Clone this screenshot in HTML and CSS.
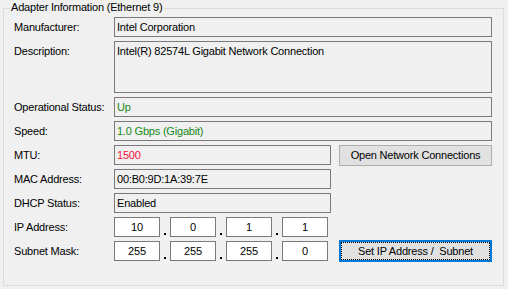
FILE: index.html
```html
<!DOCTYPE html>
<html>
<head>
<meta charset="utf-8">
<link rel="stylesheet" href="styles.css">
</head>
<body>
<div class="group">
  <div class="title">Adapter Information (Ethernet 9)</div>
  <div class="row">
    <div class="label">Manufacturer:</div>
    <div class="box wide">Intel Corporation</div>
  </div>
  <div class="row tall">
    <div class="label">Description:</div>
    <div class="box wide multi">Intel(R) 82574L Gigabit Network Connection</div>
  </div>
  <div class="row">
    <div class="label">Operational Status:</div>
    <div class="box wide green">Up</div>
  </div>
  <div class="row">
    <div class="label">Speed:</div>
    <div class="box wide green">1.0 Gbps (Gigabit)</div>
  </div>
  <div class="row">
    <div class="label">MTU:</div>
    <div class="box half red">1500</div>
    <div class="btn">Open Network Connections</div>
  </div>
  <div class="row">
    <div class="label">MAC Address:</div>
    <div class="box half">00:B0:9D:1A:39:7E</div>
  </div>
  <div class="row">
    <div class="label">DHCP Status:</div>
    <div class="box half">Enabled</div>
  </div>
  <div class="row ip-first">
    <div class="label">IP Address:</div>
    <div class="ip">10</div><span class="sep"><i class="dot"></i></span>
    <div class="ip">0</div><span class="sep"><i class="dot"></i></span>
    <div class="ip">1</div><span class="sep"><i class="dot"></i></span>
    <div class="ip">1</div>
  </div>
  <div class="row">
    <div class="label">Subnet Mask:</div>
    <div class="ip">255</div><span class="sep"><i class="dot"></i></span>
    <div class="ip">255</div><span class="sep"><i class="dot"></i></span>
    <div class="ip">255</div><span class="sep"><i class="dot"></i></span>
    <div class="ip">0</div>
    <div class="btn focus"><span class="focus-rect">Set IP Address /&nbsp; Subnet</span></div>
  </div>
</div>
</body>
</html>
```

FILE: styles.css
```css
html, body {
  margin: 0;
  padding: 0;
  background: #f0f0f0;
}
body {
  width: 508px;
  height: 289px;
  overflow: hidden;
  font-family: "Liberation Sans", Arial, sans-serif;
  font-size: 11px;
  letter-spacing: -0.2px;
  color: #000;
}
.group {
  position: relative;
  box-sizing: border-box;
  margin: 8px 4px 0 3px;
  height: 278px;
  border: 1px solid #dcdcdc;
  padding: 8px 0 0 10px;
}
.title {
  position: absolute;
  left: 5px;
  top: -8px;
  padding: 0 2px;
  line-height: 13px;
  background: #f0f0f0;
  white-space: nowrap;
}
.row {
  display: flex;
  align-items: flex-start;
  height: 20px;
  margin-bottom: 4px;
}
.row.tall {
  height: 52px;
}
.row.ip-first {
  margin-top: 1px;
}
.label {
  width: 100px;
  flex: none;
  line-height: 20px;
  white-space: nowrap;
}
.box {
  box-sizing: border-box;
  height: 20px;
  border: 1px solid #7a7a7a;
  background: #f0f0f0;
  padding: 0 2px;
  line-height: 18px;
  white-space: nowrap;
}
.box.wide { width: 378px; }
.box.half { width: 217px; }
.box.multi { height: 52px; }
.green { color: #168a16; }
.red { color: #f5103a; }
.ip {
  box-sizing: border-box;
  width: 46px;
  height: 20px;
  border: 1px solid #7a7a7a;
  background: #fff;
  text-align: center;
  line-height: 18px;
}
.sep {
  width: 10px;
  height: 20px;
  display: flex;
  justify-content: center;
  align-items: flex-end;
}
.dot {
  display: block;
  width: 2px;
  height: 2px;
  background: #000;
  margin-bottom: 2px;
}
.btn {
  box-sizing: border-box;
  margin-left: 8px;
  width: 153px;
  height: 21px;
  border: 1px solid #adadad;
  background: #e1e1e1;
  text-align: center;
  line-height: 19px;
  white-space: nowrap;
}
.btn.focus {
  margin-left: 11px;
  margin-top: -1px;
  height: 22px;
  border: 2px solid #0078d7;
  padding: 0;
  display: flex;
}
.focus-rect {
  flex: 1;
  border: 1px dotted #000;
  line-height: 16px;
}
```
